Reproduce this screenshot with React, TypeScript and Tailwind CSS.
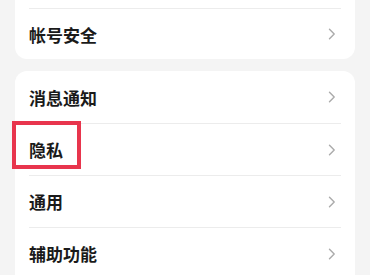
import React from "react";

function Chevron() {
  return (
    <svg width="8" height="12" viewBox="0 0 8 12" className="shrink-0">
      <polyline points="1.5,1.2 6.2,6 1.5,10.8" fill="none" stroke="#ababab" strokeWidth="1.4" strokeLinecap="round" strokeLinejoin="round" />
    </svg>
  );
}

function Row({ label, h, children }: { label: string; h: string; children?: React.ReactNode }) {
  return (
    <div className={`relative flex items-center justify-between pl-[14px] pr-[19px] ${h}`}>
      <span className="text-[17px] font-semibold text-[#1a1a1a] leading-none">{label}</span>
      <Chevron />
      {children}
    </div>
  );
}

function Sep() {
  return <div className="mx-[14px] h-px bg-[#ececec]" />;
}

export default function App() {
  return (
    <div
      className="w-[370px] h-[275px] overflow-hidden bg-[#f4f4f4]"
      style={{ fontFamily: '"Noto Sans CJK SC", "Noto Sans", sans-serif' }}
    >
      <div className="mx-[15px] bg-white rounded-b-[12px]">
        <div className="h-[8px]" />
        <Sep />
        <Row label="帐号安全" h="h-[50px]" />
      </div>
      <div className="mx-[15px] mt-[12px] bg-white rounded-t-[12px]">
        <Row label="消息通知" h="h-[52px]" />
        <Sep />
        <Row label="隐私" h="h-[51px]">
          <div className="absolute left-[-3px] top-[-3px] w-[69px] h-[48px] border-[4px] border-[#e8354d]" />
        </Row>
        <Sep />
        <Row label="通用" h="h-[51px]" />
        <Sep />
        <Row label="辅助功能" h="h-[51px]" />
      </div>
    </div>
  );
}
